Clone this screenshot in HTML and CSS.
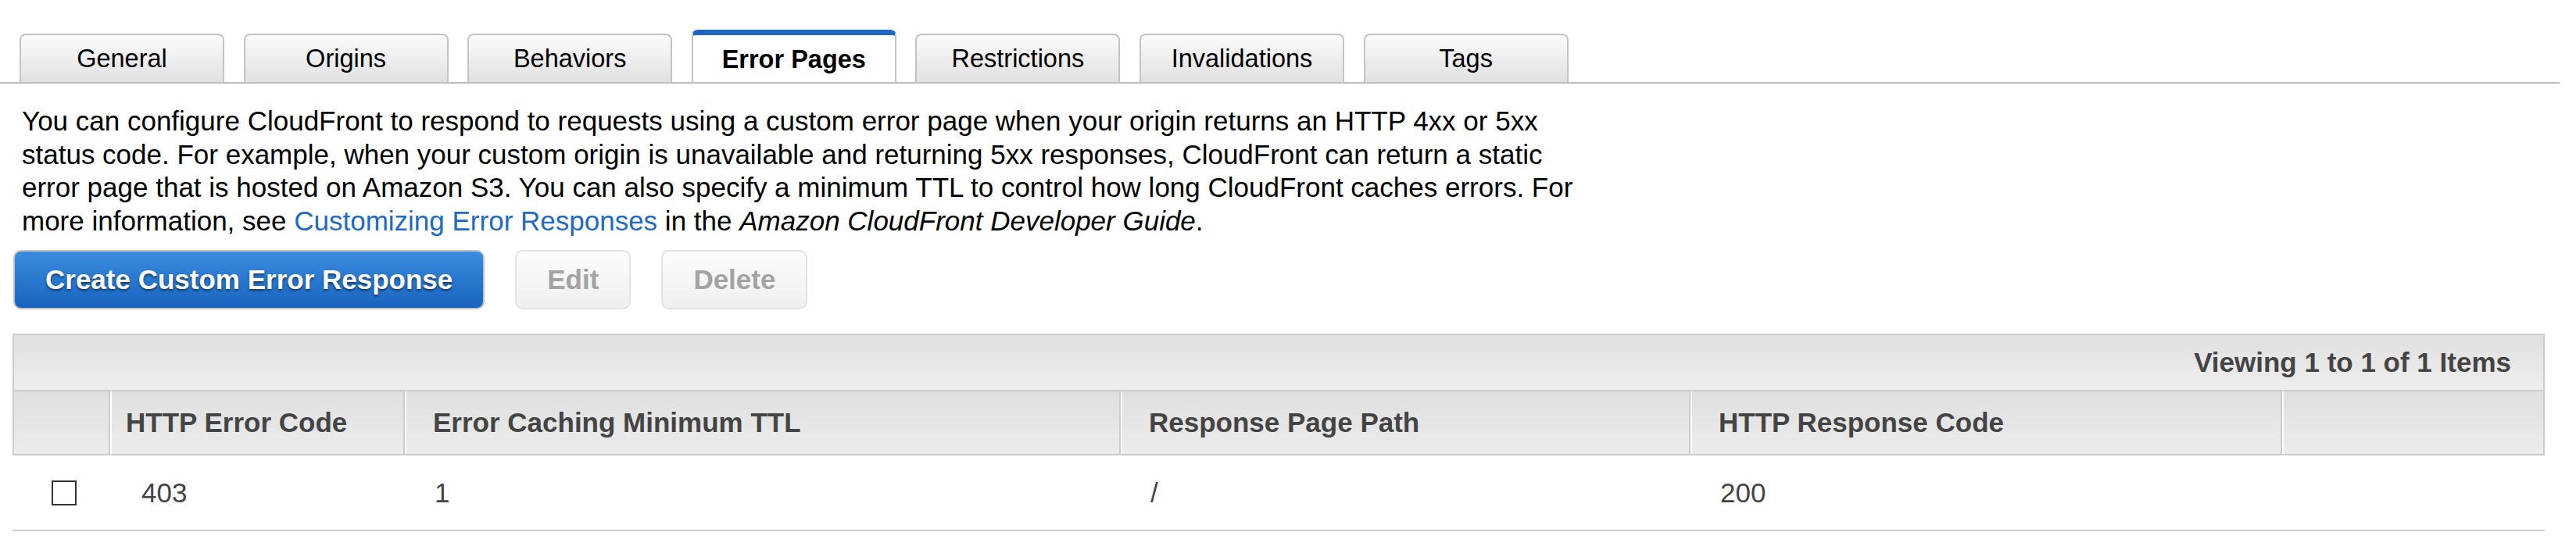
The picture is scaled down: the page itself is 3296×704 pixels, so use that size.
FILE: index.html
```html
<!DOCTYPE html>
<html lang="en">
<head>
<meta charset="utf-8">
<title>CloudFront Distribution - Error Pages</title>
<link rel="stylesheet" href="styles.css">
</head>
<body>
<div class="tabs">
  <div class="tab">General</div>
  <div class="tab">Origins</div>
  <div class="tab">Behaviors</div>
  <div class="tab active">Error Pages</div>
  <div class="tab">Restrictions</div>
  <div class="tab">Invalidations</div>
  <div class="tab">Tags</div>
</div>

<p class="intro">You can configure CloudFront to respond to requests using a custom error page when your origin returns an HTTP 4xx or 5xx status code. For example, when your custom origin is unavailable and returning 5xx responses, CloudFront can return a static error page that is hosted on Amazon S3. You can also specify a minimum TTL to control how long CloudFront caches errors. For more information, see <a class="link" href="#">Customizing Error Responses</a> in the <em>Amazon CloudFront Developer Guide</em>.</p>

<div class="actions">
  <button class="btn primary">Create Custom Error Response</button>
  <button class="btn disabled">Edit</button>
  <button class="btn disabled">Delete</button>
</div>

<div class="grid">
  <div class="bar">Viewing 1 to 1 of 1 Items</div>
  <table class="grid-table">
    <colgroup>
      <col class="c-sel">
      <col class="c-code">
      <col class="c-ttl">
      <col class="c-path">
      <col class="c-resp">
      <col class="c-end">
    </colgroup>
    <thead>
      <tr>
        <th class="sel"></th>
        <th class="code">HTTP Error Code</th>
        <th>Error Caching Minimum TTL</th>
        <th>Response Page Path</th>
        <th>HTTP Response Code</th>
        <th class="last"></th>
      </tr>
    </thead>
    <tbody>
      <tr>
        <td class="sel"><span class="check"></span></td>
        <td class="code">403</td>
        <td>1</td>
        <td>/</td>
        <td>200</td>
        <td></td>
      </tr>
    </tbody>
  </table>
</div>
</body>
</html>
```

FILE: styles.css
```css
html, body {
  margin: 0;
  padding: 0;
  background: #ffffff;
}

body {
  font-family: "Liberation Sans", Arial, sans-serif;
  color: #000;
}

/* Tabs */
.tabs {
  display: flex;
  align-items: flex-end;
  gap: 24.6px;
  width: 3250px;
  padding: 38px 0 0 25px;
  border-bottom: 2px solid #bdbdbd;
}

.tab {
  box-sizing: border-box;
  width: 262px;
  height: 62px;
  border: 2px solid #c4c4c4;
  border-bottom: none;
  border-radius: 8px 8px 0 0;
  background: linear-gradient(#fbfbfb, #e1e1e1);
  font-size: 32.5px;
  line-height: 61px;
  text-align: center;
  color: #000;
}

.tab.active {
  height: 67px;
  border-top: 7px solid #1f66c3;
  background: #ffffff;
  font-weight: bold;
  line-height: 62px;
}

/* Intro */
.intro {
  width: 2000px;
  margin: 27px 0 0 28px;
  font-size: 35px;
  line-height: 42.5px;
  color: #000;
}

.link {
  color: #1f6ac3;
  text-decoration: none;
}

/* Buttons */
.actions {
  display: flex;
  gap: 39px;
  margin: 16px 0 0 17px;
}

.btn {
  box-sizing: border-box;
  height: 76px;
  padding: 0 39px;
  border: 2px solid #c9c9c9;
  border-radius: 10px;
  font-family: "Liberation Sans", Arial, sans-serif;
  font-size: 35px;
  font-weight: bold;
  line-height: 72px;
  cursor: pointer;
}

.btn.primary {
  border-color: #c2c2c2;
  background: linear-gradient(#3a8ce0, #1864bf);
  color: #ffffff;
  text-shadow: 0 2px 3px rgba(0, 0, 0, 0.55);
}

.btn.disabled {
  border-color: #e3e3e3;
  background: linear-gradient(#fcfcfc, #efefef);
  color: #a3a3a3;
}

/* Grid */
.grid {
  width: 3240px;
  margin: 31px 0 0 16px;
}

.bar {
  box-sizing: border-box;
  height: 72px;
  border: 2px solid #cccccc;
  border-bottom: none;
  background: linear-gradient(#e0e0e0, #eeeeee);
  padding-right: 41px;
  text-align: right;
  font-size: 35px;
  font-weight: bold;
  line-height: 70px;
  color: #444;
}

.grid-table {
  width: 3240px;
  table-layout: fixed;
  border-collapse: separate;
  border-spacing: 0;
  font-size: 35px;
  color: #444;
}

.c-sel { width: 123px; }
.c-code { width: 377px; }
.c-ttl { width: 916px; }
.c-path { width: 729px; }
.c-resp { width: 757px; }
.c-end { width: 338px; }

.grid-table th {
  box-sizing: border-box;
  height: 84px;
  padding: 0 0 0 36px;
  border-top: 2px solid #cccccc;
  border-bottom: 2px solid #cccccc;
  border-left: 2px solid #cccccc;
  box-shadow: inset 2px 0 0 #ffffff;
  background: linear-gradient(#dfdfdf, #ececec);
  text-align: left;
  font-weight: bold;
  white-space: nowrap;
}

.grid-table th.sel {
  box-shadow: none;
}

.grid-table th.code {
  padding-left: 20px;
}

.grid-table th.last {
  border-right: 2px solid #cccccc;
}

.grid-table td {
  box-sizing: border-box;
  height: 97px;
  padding: 0 0 0 40px;
  border-bottom: 2px solid #cccccc;
  vertical-align: middle;
}

.grid-table td.sel {
  padding-left: 50px;
}

.grid-table td.code {
  padding-left: 42px;
}

.check {
  display: block;
  box-sizing: border-box;
  width: 32px;
  height: 32px;
  border: 2px solid #333333;
  background: #fff;
}
```
